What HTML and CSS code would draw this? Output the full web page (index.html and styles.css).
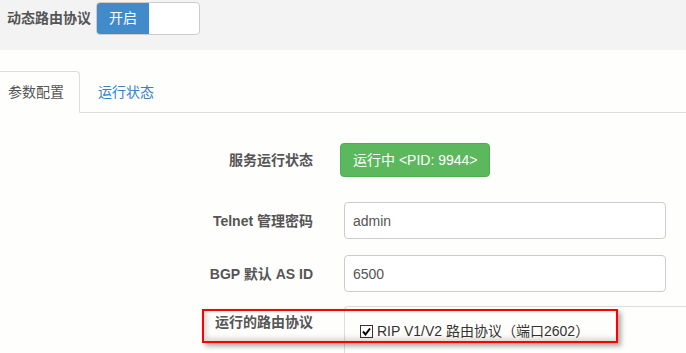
FILE: index.html
```html
<!DOCTYPE html>
<html lang="zh-CN">
<head>
    <meta charset="utf-8">
    <title>动态路由协议</title>
    <meta name="viewport" content="width=device-width, initial-scale=1">
    <link rel="stylesheet" href="styles.css">
</head>
<body>

<div class="switch-bar">
    <span class="switch-title">动态路由协议</span>
    <div class="toggle">
        <span class="toggle-on">开启</span>
        <span class="toggle-off"></span>
    </div>
</div>

<ul class="tabs">
    <li class="active"><a href="#">参数配置</a></li>
    <li><a href="#">运行状态</a></li>
</ul>

<form class="config-form">
    <div class="form-row row-status">
        <label>服务运行状态</label>
        <div class="control">
            <button type="button" class="btn-running">运行中 &lt;PID: 9944&gt;</button>
        </div>
    </div>
    <div class="form-row row-telnet">
        <label for="telnet-pass">Telnet 管理密码</label>
        <div class="control">
            <input type="text" id="telnet-pass" value="admin">
        </div>
    </div>
    <div class="form-row row-bgp">
        <label for="bgp-as">BGP 默认 AS ID</label>
        <div class="control">
            <input type="text" id="bgp-as" value="6500">
        </div>
    </div>
    <div class="form-row row-protocols">
        <label>运行的路由协议</label>
        <div class="control">
            <div class="check-box">
                <span class="check-item">
                    <span class="checkmark">
                        <svg width="11" height="11" viewBox="0 0 11 11"><path d="M2 5.5 L4.5 8.5 L9 2.5" fill="none" stroke="#000" stroke-width="2"/></svg>
                    </span>
                    RIP V1/V2 路由协议（端口2602）
                </span>
            </div>
        </div>
        <div class="highlight"></div>
    </div>
</form>

</body>
</html>
```

FILE: styles.css
```css
html, body {
    margin: 0;
    padding: 0;
}

body {
    width: 686px;
    height: 353px;
    overflow: hidden;
    background: #fefefc;
    font: normal 14px/20px "Liberation Sans", "Noto Sans CJK SC", sans-serif;
    color: #555;
}

.switch-bar {
    box-sizing: border-box;
    height: 50px;
    padding: 2px 0 0 7px;
    background: #f3f3f3;
    display: flex;
    align-items: flex-start;
}

    .switch-title {
        font-weight: bold;
        line-height: 33px;
        margin-right: 5px;
        color: #555;
    }

    .toggle {
        box-sizing: border-box;
        width: 104px;
        height: 33px;
        border: 1px solid #ccc;
        border-radius: 4px;
        overflow: hidden;
        display: flex;
        background: #fff;
    }

        .toggle-on {
            width: 52px;
            background: #428bca;
            color: #fff;
            text-align: center;
            line-height: 31px;
        }

        .toggle-off {
            flex: 1;
        }

.tabs {
    list-style: none;
    margin: 21px 0 0 0;
    padding: 0;
    display: flex;
    border-bottom: 1px solid #ddd;
}

    .tabs li {
        margin: 0 2px -1px 0;
    }

        .tabs li a {
            display: block;
            padding: 10px 15px;
            border: 1px solid transparent;
            border-radius: 4px 4px 0 0;
            color: #3a80c3;
            text-decoration: none;
        }

        .tabs li.active {
            margin-left: -4px;
        }

        .tabs li.active a {
            padding: 10px 15px 10px 11px;
            color: #555;
            background: #fefefc;
            border-color: #ddd #ddd transparent #ddd;
        }

.config-form {
    margin: 0;
}

    .form-row {
        position: relative;
        display: grid;
        grid-template-columns: 313px 1fr;
        column-gap: 27px;
        align-items: center;
    }

        .form-row label {
            text-align: right;
            font-weight: bold;
            color: #555;
        }

    .row-status {
        margin-top: 30px;
    }

    .row-telnet {
        margin-top: 25px;
    }

    .row-bgp {
        margin-top: 16px;
    }

    .row-protocols {
        margin-top: 14px;
        align-items: start;
    }

        .row-protocols label {
            padding-top: 6px;
        }

.btn-running {
    box-sizing: border-box;
    height: 34px;
    width: 150px;
    padding: 0 12px;
    border: 1px solid #4cae4c;
    border-radius: 4px;
    background: #5cb85c;
    color: #fff;
    font: normal 14px/32px "Liberation Sans", "Noto Sans CJK SC", sans-serif;
    white-space: nowrap;
}

.control input {
    box-sizing: border-box;
    display: block;
    width: 322px;
    height: 37px;
    margin-left: 4px;
    padding: 0 8px;
    border: 1px solid #ccc;
    border-radius: 4px;
    background: #fff;
    color: #555;
    font: normal 14px "Liberation Sans", "Noto Sans CJK SC", sans-serif;
    outline: none;
}

.check-box {
    box-sizing: border-box;
    width: 342px;
    height: 47px;
    margin-left: 4px;
    padding: 14px 0 0 15px;
    border: 1px solid #ddd;
    border-right: none;
    border-bottom: none;
    border-radius: 4px 0 0 0;
}

    .check-item {
        display: flex;
        align-items: center;
        color: #333;
        white-space: nowrap;
    }

    .checkmark {
        box-sizing: border-box;
        width: 13px;
        height: 13px;
        margin-right: 4px;
        border: 1px solid #333;
        background: #fff;
        display: flex;
        align-items: center;
        justify-content: center;
    }

.highlight {
    position: absolute;
    left: 202px;
    top: 3px;
    width: 416px;
    height: 34px;
    box-sizing: border-box;
    border: 2px solid #f00;
    box-shadow: 3px 3px 5px rgba(0, 0, 0, 0.35), inset 3px -3px 5px rgba(0, 0, 0, 0.15);
}
```
